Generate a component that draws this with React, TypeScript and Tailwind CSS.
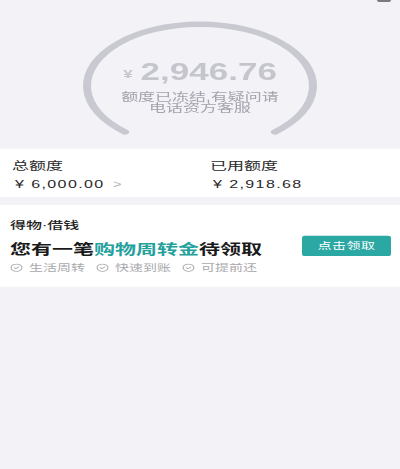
import React from "react";

const CJK = "font-['Liberation_Sans','Noto_Sans_CJK_SC',sans-serif]";

function CheckCircle() {
  return (
    <svg width="13" height="13" viewBox="0 0 24 24" fill="none" stroke="#a9a9ad" strokeWidth="2" strokeLinecap="round" strokeLinejoin="round">
      <circle cx="12" cy="12" r="10" />
      <path d="m8 12 3 3 5-5" />
    </svg>
  );
}

export default function App() {
  return (
    <div className="w-[400px] h-[469px] overflow-hidden bg-[#f3f2f7]">
      <div className={`w-[400px] h-[700px] origin-top scale-y-[0.67] flex flex-col ${CJK}`}>
        {/* top area */}
        <div className="relative h-[222px] shrink-0">
          <svg className="absolute inset-0" width="400" height="222" viewBox="0 0 400 222" fill="none">
            <path d="M125 197 A113 92 0 1 1 275 197" stroke="#c9c9d1" strokeWidth="8" strokeLinecap="round" />
          </svg>
          <div className="absolute right-[9px] top-0 w-[14px] h-[3px] rounded-b-full bg-[#7a7a80]" />
          <div className="relative flex flex-col items-center pt-[89px]">
            <div className="flex items-end h-[36px] leading-[36px] text-[#c5c6cd] font-bold">
              <span className="text-[17px] leading-[28px] mr-[8px] font-['Liberation_Sans',sans-serif]">¥</span>
              <span className="text-[35px] font-['Liberation_Sans',sans-serif]">2,946.76</span>
            </div>
            <div className="mt-[11px] text-[17px] leading-[17px] text-[#a3a3ad] text-center">
              <div>额度已冻结,有疑问请</div>
              <div>电话资方客服</div>
            </div>
          </div>
        </div>

        {/* card 1 */}
        <div className="h-[72px] shrink-0 bg-white flex pt-[17px]">
          <div className="w-[210px] pl-[12px]">
            <div className="text-[17px] leading-[20px] text-[#2a2a2a]">总额度</div>
            <div className="mt-[6px] pl-[3px] flex items-center leading-[20px] text-[16px] text-[#2a2a2a] tracking-[1.4px]">
              <span>¥ 6,000.00</span>
              <span className="ml-[8px] text-[15px] text-[#b5b5b8] tracking-normal">&gt;</span>
            </div>
          </div>
          <div className="flex-1">
            <div className="text-[17px] leading-[20px] text-[#2a2a2a]">已用额度</div>
            <div className="mt-[6px] pl-[3px] leading-[20px] text-[16px] text-[#2a2a2a] tracking-[1.4px]">¥ 2,918.68</div>
          </div>
        </div>

        {/* card 2 */}
        <div className="mt-[12px] h-[122px] shrink-0 bg-white flex">
          <div className="flex-1 pl-[10px] pt-[21px]">
            <div className="text-[16px] leading-[20px] font-medium text-[#222]">得物·借钱</div>
            <div className="mt-[8px] text-[21px] leading-[30px] font-bold text-[#1a1a1a] font-['Noto_Sans_CJK_SC',sans-serif]">
              您有一笔<span className="text-[#24a19d]">购物周转金</span>待领取
            </div>
            <div className="mt-[4px] flex items-center h-[20px] text-[14px] leading-[20px] text-[#a9a9ad]">
              <CheckCircle />
              <span className="ml-[6px]">生活周转</span>
              <span className="ml-[11px] flex"><CheckCircle /></span>
              <span className="ml-[6px]">快速到账</span>
              <span className="ml-[11px] flex"><CheckCircle /></span>
              <span className="ml-[6px]">可提前还</span>
            </div>
          </div>
          <div className="mt-[46px] mr-[9px] w-[89px] h-[30px] rounded-[3px] bg-[#2ba7a4] text-white text-[14px] flex items-center justify-center tracking-[0.5px]">
            点击领取
          </div>
        </div>
      </div>
    </div>
  );
}
